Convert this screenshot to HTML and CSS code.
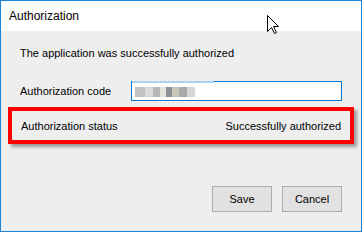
FILE: index.html
```html
<!DOCTYPE html>
<html lang="en">
<head>
    <meta charset="UTF-8">
    <title>Authorization</title>
    <link rel="stylesheet" href="styles.css">
</head>
<body>
    <div class="window">
        <div class="titlebar">Authorization</div>

        <!-- mouse pointer over the title bar -->
        <svg class="cursor" width="13" height="20" viewBox="0 0 13 20">
            <path d="M0.5 0.5 L0.5 16.5 L4.5 12.5 L7.5 18.5 L9.5 17.5 L6.5 11.5 L11.5 11.5 Z" fill="#fff" stroke="#000" stroke-width="1"/>
        </svg>

        <div class="content">
            <p class="message">The application was successfully authorized</p>

            <div class="field">
                <label class="field-label">Authorization code</label>
                <div class="input">
                    <span class="focus-bar"></span>
                    <span class="blur"></span>
                </div>
            </div>

            <div class="status">
                <span>Authorization status</span>
                <span>Successfully authorized</span>
            </div>

            <div class="actions">
                <button class="btn">Save</button>
                <button class="btn">Cancel</button>
            </div>
        </div>
    </div>
</body>
</html>
```

FILE: styles.css
```css
* {
    box-sizing: border-box;
    margin: 0;
    padding: 0;
}

body {
    width: 362px;
    height: 232px;
    overflow: hidden;
    font-family: 'Liberation Sans', Arial, sans-serif;
    font-size: 11px;
    color: #000;
}

.window {
    position: relative;
    width: 362px;
    height: 232px;
    border: 1px solid #1883d7;
    background-color: #eeeeee;
}

.titlebar {
    height: 30px;
    line-height: 30px;
    padding-left: 8px;
    font-size: 12px;
    background-color: #fff;
}

.cursor {
    position: absolute;
    left: 266px;
    top: 14px;
}

.content {
    padding: 14px 19px 0 19px;
}

.message {
    line-height: 16px;
}

.field {
    display: flex;
    align-items: center;
    margin-top: 20px;
}

.field-label {
    width: 111px;
}

.input {
    position: relative;
    flex: 1;
    height: 20px;
    background-color: #fff;
    border: 1px solid #0078d7;
}

.focus-bar {
    position: absolute;
    left: 0;
    top: -1px;
    width: 82px;
    height: 2px;
    background-color: #a9d3f5;
}

.blur {
    position: absolute;
    left: 3px;
    top: 5px;
    width: 60px;
    height: 10px;
    background: linear-gradient(90deg, #c4c2c0 0 16%, #dcdcdc 16% 30%, #b7b7b9 30% 42%, #e4e2dc 42% 52%, #8f8f96 52% 62%, #c9c5b8 62% 74%, #a9a9a9 74% 86%, #d6d6d8 86% 100%);
}

.status {
    display: flex;
    justify-content: space-between;
    align-items: center;
    height: 37px;
    margin: 6px -12px 0 -12px;
    padding: 0 9px;
    border: 4px solid #ff0000;
    box-shadow: 3px 3px 3px rgba(0, 0, 0, 0.35);
}

.actions {
    display: flex;
    justify-content: flex-end;
    gap: 10px;
    margin-top: 42px;
}

.btn {
    width: 60px;
    height: 26px;
    font-family: inherit;
    font-size: 11px;
    color: #000;
    background-color: #e1e1e1;
    border: 1px solid #adadad;
}
```
